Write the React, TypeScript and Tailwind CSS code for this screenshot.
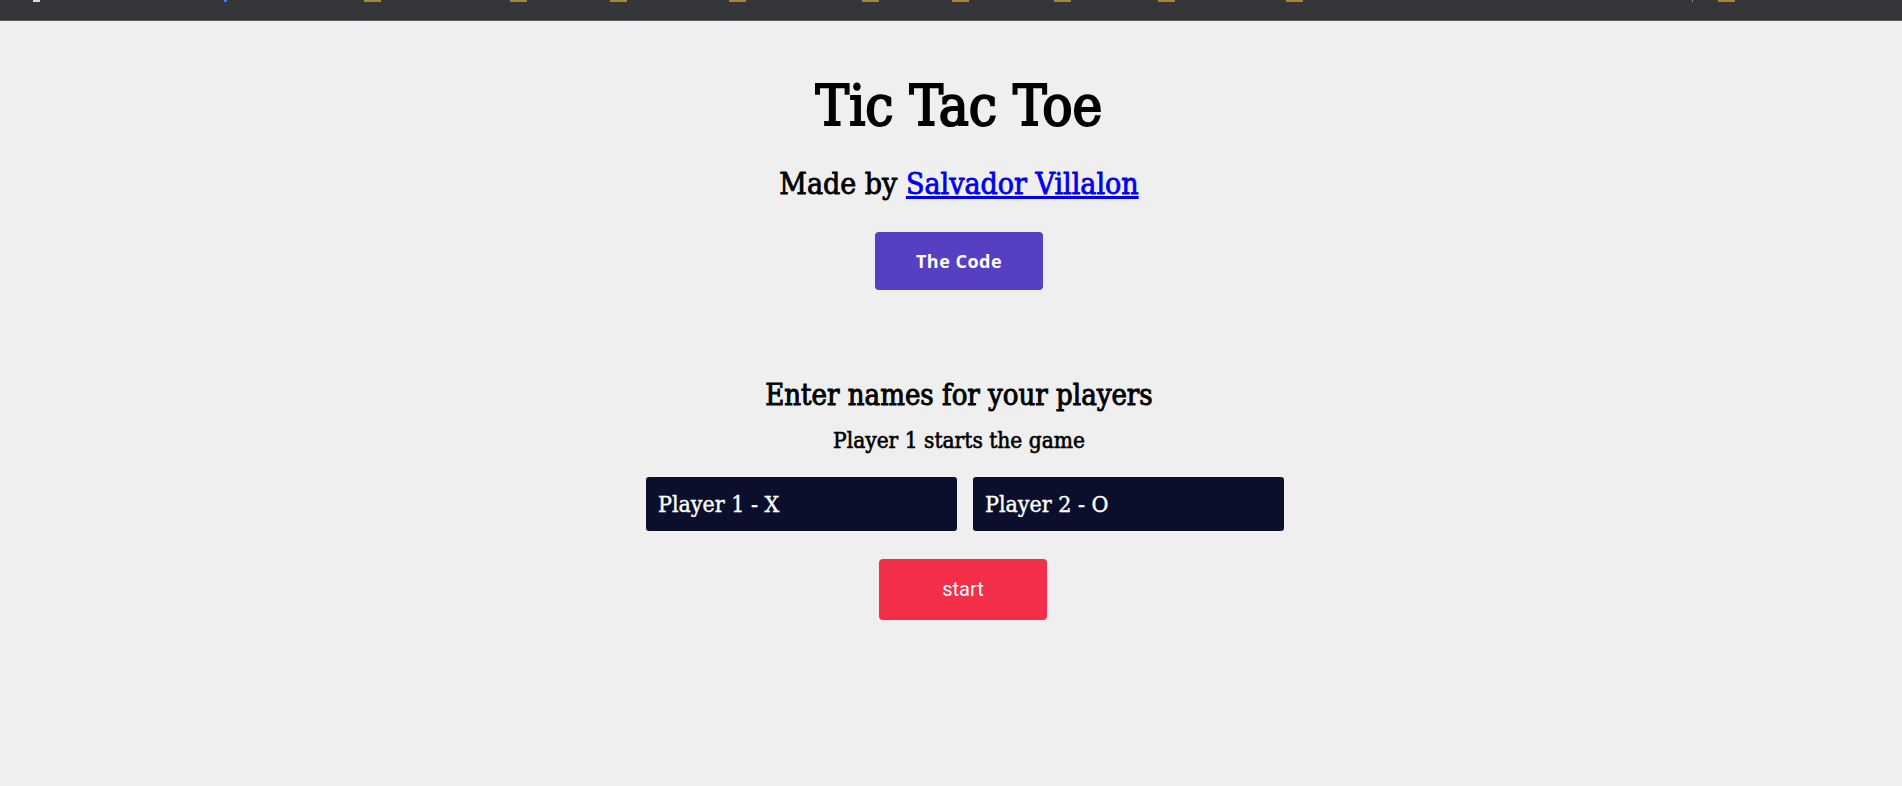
import React from 'react';

const serif = "font-['DejaVu_Serif',serif] font-stretch-condensed";

// little bits of the bookmark bar poking in at the very top
const marks = [
  { x: 33, w: 7, c: 'bg-[#dcdcdc]' },
  { x: 224, w: 3, c: 'bg-[#3b82f6]' },
  { x: 364, w: 17, c: 'bg-[#a8873a]' },
  { x: 510, w: 17, c: 'bg-[#a8873a]' },
  { x: 610, w: 17, c: 'bg-[#a8873a]' },
  { x: 729, w: 17, c: 'bg-[#a8873a]' },
  { x: 862, w: 17, c: 'bg-[#a8873a]' },
  { x: 952, w: 17, c: 'bg-[#a8873a]' },
  { x: 1054, w: 17, c: 'bg-[#a8873a]' },
  { x: 1158, w: 17, c: 'bg-[#a8873a]' },
  { x: 1286, w: 17, c: 'bg-[#a8873a]' },
  { x: 1692, w: 1, c: 'bg-[#8a8a8a]' },
  { x: 1718, w: 17, c: 'bg-[#a8873a]' },
];

const TopBar = () => (
  <div className="relative h-[21px] bg-[#35363a] border-b border-[#5d5e62]">
    {marks.map((m, i) => (
      <span
        key={i}
        className={`absolute top-0 h-[2px] ${m.c}`}
        style={{ left: m.x, width: m.w }}
      />
    ))}
  </div>
);

export default function App() {
  return (
    <div className="min-h-[786px] bg-[#efefef] text-black">
      <TopBar />
      <div className="flex flex-col items-center pl-4">
        <h1 className={`${serif} mt-[57px] text-[56px] leading-none [-webkit-text-stroke:2px]`}>Tic Tac Toe</h1>
        <h2 className={`${serif} mt-[35px] text-[30px] leading-none [-webkit-text-stroke:0.8px]`}>
          Made by{' '}
          <a href="#" className="text-[#0000ee] underline">
            Salvador Villalon
          </a>
        </h2>
        <button className="mt-[33px] w-[168px] h-[58px] rounded-[4px] bg-[#563fc2] text-white font-['Open_Sans',sans-serif] font-bold text-[18px] tracking-[0.5px]">
          The Code
        </button>

        <h3 className={`${serif} mt-[91px] text-[29px] leading-none [-webkit-text-stroke:0.9px]`}>
          Enter names for your players
        </h3>
        <p className={`${serif} mt-[19px] text-[22.5px] leading-none [-webkit-text-stroke:0.6px]`}>
          Player 1 starts the game
        </p>

        <div className="mt-[25px] flex gap-4 pl-3">
          <input
            defaultValue="Player 1 - X"
            className={`${serif} w-[311px] h-[54px] rounded-[3px] bg-[#0b0f2c] px-3 text-[23px] text-white outline-none [-webkit-text-stroke:0.4px]`}
          />
          <input
            defaultValue="Player 2 - O"
            className={`${serif} w-[311px] h-[54px] rounded-[3px] bg-[#0b0f2c] px-3 text-[23px] text-white outline-none [-webkit-text-stroke:0.4px]`}
          />
        </div>

        <button className="mt-[28px] ml-2 w-[168px] h-[61px] rounded-[4px] bg-[#f22e49] text-white font-['Roboto',sans-serif] text-[20px]">
          start
        </button>
      </div>
    </div>
  );
}
